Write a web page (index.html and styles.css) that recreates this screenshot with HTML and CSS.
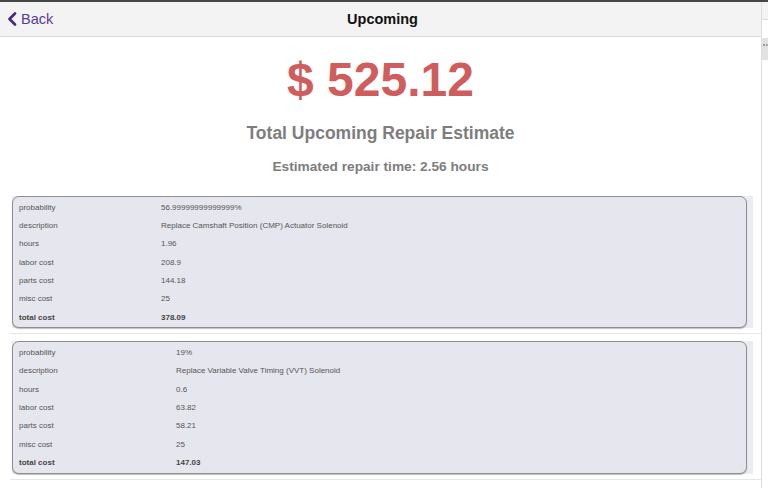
FILE: index.html
```html
<!DOCTYPE html>
<html>
<head>
<meta charset="utf-8">
<link rel="stylesheet" href="styles.css">
</head>
<body>
<div class="page">
  <header class="bar">
    <a class="back" href="#">
      <svg class="chev" width="10" height="14" viewBox="0 0 10 14"><path d="M8 1.5 L2.5 7 L8 12.5" fill="none" stroke="#4a2586" stroke-width="2.6" stroke-linecap="round" stroke-linejoin="round"/></svg>
      <span>Back</span>
    </a>
    <h1 class="title">Upcoming</h1>
    <span></span>
  </header>
  <section class="summary">
    <div class="amount">$ 525.12</div>
    <h2 class="label">Total Upcoming Repair Estimate</h2>
    <p class="time">Estimated repair time: 2.56 hours</p>
  </section>
  <ul class="estimates">
    <li class="item">
      <div class="wrap">
        <div class="card card-a">
          <div class="row"><span>probability</span><span>56.99999999999999%</span></div>
          <div class="row"><span>description</span><span>Replace Camshaft Position (CMP) Actuator Solenoid</span></div>
          <div class="row"><span>hours</span><span>1.96</span></div>
          <div class="row"><span>labor cost</span><span>208.9</span></div>
          <div class="row"><span>parts cost</span><span>144.18</span></div>
          <div class="row"><span>misc cost</span><span>25</span></div>
          <div class="row total"><span>total cost</span><span>378.09</span></div>
        </div>
      </div>
    </li>
    <li class="item">
      <div class="wrap">
        <div class="card card-b">
          <div class="row"><span>probability</span><span>19%</span></div>
          <div class="row"><span>description</span><span>Replace Variable Valve Timing (VVT) Solenoid</span></div>
          <div class="row"><span>hours</span><span>0.6</span></div>
          <div class="row"><span>labor cost</span><span>63.82</span></div>
          <div class="row"><span>parts cost</span><span>58.21</span></div>
          <div class="row"><span>misc cost</span><span>25</span></div>
          <div class="row total"><span>total cost</span><span>147.03</span></div>
        </div>
      </div>
    </li>
  </ul>
</div>
<aside class="rail">
  <div class="rail-top"></div>
  <div class="rail-grip"><div class="dots"></div></div>
</aside>
</body>
</html>
```

FILE: styles.css
```css
html, body {
  margin: 0;
  padding: 0;
  background: #fff;
}
body {
  border-top: 2px solid #464646;
  display: flex;
  height: 486px;
  overflow: hidden;
  font-family: "Liberation Sans", Arial, sans-serif;
}
.page {
  width: 761px;
  border-right: 1px solid #dedede;
  flex: none;
}
.bar {
  height: 34px;
  background: #f3f3f3;
  border-bottom: 1px solid #dcdcdc;
  display: grid;
  grid-template-columns: 1fr auto 1fr;
  align-items: center;
}
.back {
  display: flex;
  align-items: center;
  gap: 4px;
  padding-left: 7px;
  color: #5a3a9a;
  text-decoration: none;
  font-size: 14.5px;
}
.chev {
  display: block;
}
.title {
  margin: 0;
  font-size: 14.5px;
  font-weight: bold;
  color: #111;
  padding-left: 4px;
}
.summary {
  text-align: center;
  padding-top: 15px;
  padding-bottom: 13px;
}
.amount {
  font-size: 48px;
  line-height: 56px;
  font-weight: bold;
  color: #cf5d5e;
}
.label {
  margin: 14px 0 0;
  font-size: 17.5px;
  line-height: 22px;
  font-weight: bold;
  color: #7d7d7d;
}
.time {
  margin: 14px 0 0;
  font-size: 13.7px;
  line-height: 18px;
  font-weight: bold;
  color: #7d7d7d;
}
.estimates {
  list-style: none;
  margin: 0;
  padding: 0 0 0 10px;
}
.item {
  padding: 7px 8px 5px 2px;
  border-bottom: 1px solid #e6e6e6;
}
.wrap {
  background: #ebebf2;
  padding-right: 6px;
}
.card {
  background: #e6e6ef;
  border: 1px solid #8e8e8e;
  border-radius: 7px;
  box-shadow: 0 1px 1px rgba(0,0,0,0.25);
  padding: 1px 0;
}
.row {
  display: grid;
  height: 18.33px;
  align-items: center;
  padding-left: 6px;
  font-size: 8px;
  color: #555;
}
.card-a .row {
  grid-template-columns: 142px 1fr;
}
.card-b .row {
  grid-template-columns: 157px 1fr;
}
.row.total {
  font-weight: bold;
  color: #444;
}
.rail {
  flex: 1;
  display: flex;
  flex-direction: column;
}
.rail-top {
  height: 17px;
  background: #f3f3f3;
  border-bottom: 1px solid #ddd;
}
.rail-grip {
  margin-top: 18px;
  height: 22px;
  background: #e2e2e2;
  padding-top: 6px;
  box-sizing: border-box;
}
.dots {
  border-top: 2px dotted #999;
  margin-left: 1px;
}
```
